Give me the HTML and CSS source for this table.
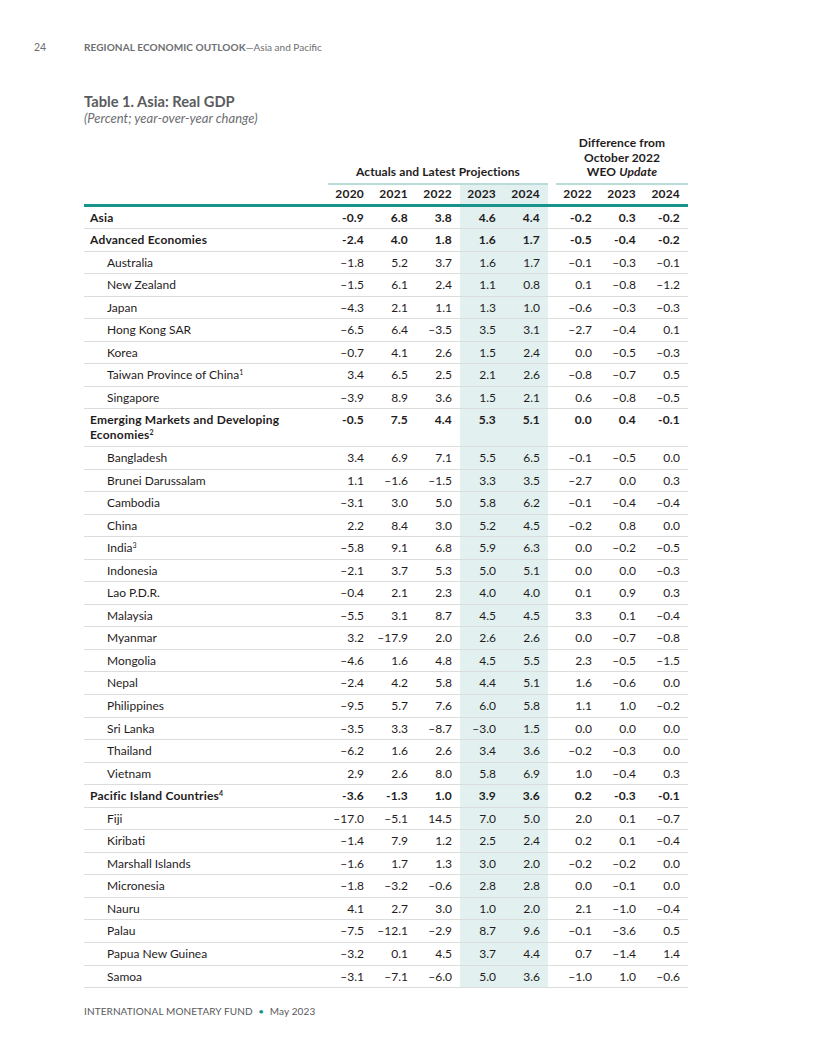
FILE: index.html
```html
<!DOCTYPE html>
<html lang="en">
<head>
<meta charset="utf-8">
<title>Table 1. Asia: Real GDP</title>
<link rel="stylesheet" href="styles.css">
</head>
<body>
<div class="page">
  <header class="running-head">
    <span class="folio">24</span>
    <span class="head-title"><b>REGIONAL ECONOMIC OUTLOOK</b>—Asia and Pacific</span>
  </header>

  <section class="content">
    <h1 class="table-title">Table 1. Asia: Real GDP</h1>
    <p class="table-sub">(Percent; year-over-year change)</p>

    <table class="gdp">
      <colgroup>
        <col class="c-label">
        <col class="c-num"><col class="c-num"><col class="c-num">
        <col class="c-num"><col class="c-num">
        <col class="c-gap">
        <col class="c-num"><col class="c-num"><col class="c-num">
      </colgroup>
      <thead>
        <tr class="group-row">
          <th></th>
          <th colspan="5" class="group"><span>Actuals and Latest Projections</span></th>
          <th></th>
          <th colspan="3" class="group"><span>Difference from<br>October 2022<br>WEO <i>Update</i></span></th>
        </tr>
        <tr class="year-row">
          <th></th>
          <th>2020</th><th>2021</th><th>2022</th><th class="sh">2023</th><th class="sh">2024</th>
          <th></th>
          <th>2022</th><th>2023</th><th>2024</th>
        </tr>
      </thead>
      <tbody>
        <tr class="agg"><td>Asia</td><td>-0.9</td><td>6.8</td><td>3.8</td><td class="sh">4.6</td><td class="sh">4.4</td><td></td><td>-0.2</td><td>0.3</td><td>-0.2</td></tr>
        <tr class="agg"><td>Advanced Economies</td><td>-2.4</td><td>4.0</td><td>1.8</td><td class="sh">1.6</td><td class="sh">1.7</td><td></td><td>-0.5</td><td>-0.4</td><td>-0.2</td></tr>
        <tr><td>Australia</td><td>–1.8</td><td>5.2</td><td>3.7</td><td class="sh">1.6</td><td class="sh">1.7</td><td></td><td>–0.1</td><td>–0.3</td><td>–0.1</td></tr>
        <tr><td>New Zealand</td><td>–1.5</td><td>6.1</td><td>2.4</td><td class="sh">1.1</td><td class="sh">0.8</td><td></td><td>0.1</td><td>–0.8</td><td>–1.2</td></tr>
        <tr><td>Japan</td><td>–4.3</td><td>2.1</td><td>1.1</td><td class="sh">1.3</td><td class="sh">1.0</td><td></td><td>–0.6</td><td>–0.3</td><td>–0.3</td></tr>
        <tr><td>Hong Kong SAR</td><td>–6.5</td><td>6.4</td><td>–3.5</td><td class="sh">3.5</td><td class="sh">3.1</td><td></td><td>–2.7</td><td>–0.4</td><td>0.1</td></tr>
        <tr><td>Korea</td><td>–0.7</td><td>4.1</td><td>2.6</td><td class="sh">1.5</td><td class="sh">2.4</td><td></td><td>0.0</td><td>–0.5</td><td>–0.3</td></tr>
        <tr><td>Taiwan Province of China<sup>1</sup></td><td>3.4</td><td>6.5</td><td>2.5</td><td class="sh">2.1</td><td class="sh">2.6</td><td></td><td>–0.8</td><td>–0.7</td><td>0.5</td></tr>
        <tr><td>Singapore</td><td>–3.9</td><td>8.9</td><td>3.6</td><td class="sh">1.5</td><td class="sh">2.1</td><td></td><td>0.6</td><td>–0.8</td><td>–0.5</td></tr>
        <tr class="agg two-line"><td>Emerging Markets and Developing Economies<sup>2</sup></td><td>-0.5</td><td>7.5</td><td>4.4</td><td class="sh">5.3</td><td class="sh">5.1</td><td></td><td>0.0</td><td>0.4</td><td>-0.1</td></tr>
        <tr><td>Bangladesh</td><td>3.4</td><td>6.9</td><td>7.1</td><td class="sh">5.5</td><td class="sh">6.5</td><td></td><td>–0.1</td><td>–0.5</td><td>0.0</td></tr>
        <tr><td>Brunei Darussalam</td><td>1.1</td><td>–1.6</td><td>–1.5</td><td class="sh">3.3</td><td class="sh">3.5</td><td></td><td>–2.7</td><td>0.0</td><td>0.3</td></tr>
        <tr><td>Cambodia</td><td>–3.1</td><td>3.0</td><td>5.0</td><td class="sh">5.8</td><td class="sh">6.2</td><td></td><td>–0.1</td><td>–0.4</td><td>–0.4</td></tr>
        <tr><td>China</td><td>2.2</td><td>8.4</td><td>3.0</td><td class="sh">5.2</td><td class="sh">4.5</td><td></td><td>–0.2</td><td>0.8</td><td>0.0</td></tr>
        <tr><td>India<sup>3</sup></td><td>–5.8</td><td>9.1</td><td>6.8</td><td class="sh">5.9</td><td class="sh">6.3</td><td></td><td>0.0</td><td>–0.2</td><td>–0.5</td></tr>
        <tr><td>Indonesia</td><td>–2.1</td><td>3.7</td><td>5.3</td><td class="sh">5.0</td><td class="sh">5.1</td><td></td><td>0.0</td><td>0.0</td><td>–0.3</td></tr>
        <tr><td>Lao P.D.R.</td><td>–0.4</td><td>2.1</td><td>2.3</td><td class="sh">4.0</td><td class="sh">4.0</td><td></td><td>0.1</td><td>0.9</td><td>0.3</td></tr>
        <tr><td>Malaysia</td><td>–5.5</td><td>3.1</td><td>8.7</td><td class="sh">4.5</td><td class="sh">4.5</td><td></td><td>3.3</td><td>0.1</td><td>–0.4</td></tr>
        <tr><td>Myanmar</td><td>3.2</td><td>–17.9</td><td>2.0</td><td class="sh">2.6</td><td class="sh">2.6</td><td></td><td>0.0</td><td>–0.7</td><td>–0.8</td></tr>
        <tr><td>Mongolia</td><td>–4.6</td><td>1.6</td><td>4.8</td><td class="sh">4.5</td><td class="sh">5.5</td><td></td><td>2.3</td><td>–0.5</td><td>–1.5</td></tr>
        <tr><td>Nepal</td><td>–2.4</td><td>4.2</td><td>5.8</td><td class="sh">4.4</td><td class="sh">5.1</td><td></td><td>1.6</td><td>–0.6</td><td>0.0</td></tr>
        <tr><td>Philippines</td><td>–9.5</td><td>5.7</td><td>7.6</td><td class="sh">6.0</td><td class="sh">5.8</td><td></td><td>1.1</td><td>1.0</td><td>–0.2</td></tr>
        <tr><td>Sri Lanka</td><td>–3.5</td><td>3.3</td><td>–8.7</td><td class="sh">–3.0</td><td class="sh">1.5</td><td></td><td>0.0</td><td>0.0</td><td>0.0</td></tr>
        <tr><td>Thailand</td><td>–6.2</td><td>1.6</td><td>2.6</td><td class="sh">3.4</td><td class="sh">3.6</td><td></td><td>–0.2</td><td>–0.3</td><td>0.0</td></tr>
        <tr><td>Vietnam</td><td>2.9</td><td>2.6</td><td>8.0</td><td class="sh">5.8</td><td class="sh">6.9</td><td></td><td>1.0</td><td>–0.4</td><td>0.3</td></tr>
        <tr class="agg"><td>Pacific Island Countries<sup>4</sup></td><td>-3.6</td><td>-1.3</td><td>1.0</td><td class="sh">3.9</td><td class="sh">3.6</td><td></td><td>0.2</td><td>-0.3</td><td>-0.1</td></tr>
        <tr><td>Fiji</td><td>–17.0</td><td>–5.1</td><td>14.5</td><td class="sh">7.0</td><td class="sh">5.0</td><td></td><td>2.0</td><td>0.1</td><td>–0.7</td></tr>
        <tr><td>Kiribati</td><td>–1.4</td><td>7.9</td><td>1.2</td><td class="sh">2.5</td><td class="sh">2.4</td><td></td><td>0.2</td><td>0.1</td><td>–0.4</td></tr>
        <tr><td>Marshall Islands</td><td>–1.6</td><td>1.7</td><td>1.3</td><td class="sh">3.0</td><td class="sh">2.0</td><td></td><td>–0.2</td><td>–0.2</td><td>0.0</td></tr>
        <tr><td>Micronesia</td><td>–1.8</td><td>–3.2</td><td>–0.6</td><td class="sh">2.8</td><td class="sh">2.8</td><td></td><td>0.0</td><td>–0.1</td><td>0.0</td></tr>
        <tr><td>Nauru</td><td>4.1</td><td>2.7</td><td>3.0</td><td class="sh">1.0</td><td class="sh">2.0</td><td></td><td>2.1</td><td>–1.0</td><td>–0.4</td></tr>
        <tr><td>Palau</td><td>–7.5</td><td>–12.1</td><td>–2.9</td><td class="sh">8.7</td><td class="sh">9.6</td><td></td><td>–0.1</td><td>–3.6</td><td>0.5</td></tr>
        <tr><td>Papua New Guinea</td><td>–3.2</td><td>0.1</td><td>4.5</td><td class="sh">3.7</td><td class="sh">4.4</td><td></td><td>0.7</td><td>–1.4</td><td>1.4</td></tr>
        <tr><td>Samoa</td><td>–3.1</td><td>–7.1</td><td>–6.0</td><td class="sh">5.0</td><td class="sh">3.6</td><td></td><td>–1.0</td><td>1.0</td><td>–0.6</td></tr>
      </tbody>
    </table>
  </section>

  <footer class="running-foot">INTERNATIONAL MONETARY FUND <span class="dot">•</span> May 2023</footer>
</div>
</body>
</html>
```

FILE: styles.css
```css
* { box-sizing: border-box; }

html, body {
  margin: 0;
  padding: 0;
  background: #ffffff;
}

body {
  font-family: Lato, "Liberation Sans", sans-serif;
  color: #1f1c1d;
}

.page {
  width: 816px;
  height: 1056px;
  position: relative;
  padding-top: 41px;
}

.running-head {
  display: flex;
  align-items: baseline;
  padding-left: 34px;
  font-size: 10px;
  color: #6d6e71;
}

.folio {
  width: 50px;
  font-size: 10.5px;
}

.head-title b {
  font-weight: 700;
  letter-spacing: 0.1px;
}

.content {
  padding-left: 84px;
  padding-top: 39px;
}

.table-title {
  margin: 0;
  font-size: 14.7px;
  font-weight: 700;
  color: #5a5b5d;
  line-height: 18px;
}

.table-sub {
  margin: 0;
  font-size: 13px;
  font-style: italic;
  color: #6d6e71;
  line-height: 16px;
}

.gdp {
  margin-top: 10px;
  width: 604px;
  table-layout: fixed;
  border-collapse: collapse;
  font-size: 12px;
  line-height: 14px;
}

.c-label { width: 244px; }
.c-num { width: 44px; }
.c-gap { width: 8px; }

.gdp th {
  font-weight: 700;
  padding: 0;
}

.group-row th {
  vertical-align: bottom;
  padding: 0;
  font-size: 12px;
  line-height: 14.5px;
}

.group-row th.group {
  text-align: center;
  border-bottom: 2px solid #b9dcd9;
  padding-bottom: 3px;
  letter-spacing: 0.1px;
}

.year-row th {
  text-align: right;
  padding: 2.5px 8px 2.5px 0;
  border-bottom: 3px solid #17958d;
  letter-spacing: 0.2px;
}

.gdp td {
  padding: 4px 8px 3.55px 0;
  text-align: right;
  vertical-align: top;
  border-bottom: 1px solid #dcdcdc;
  white-space: nowrap;
}

.gdp td:first-child {
  text-align: left;
  padding-left: 23px;
  white-space: normal;
}

.gdp tr.agg td {
  font-weight: 700;
  letter-spacing: 0.2px;
}

.gdp tr.agg td:first-child {
  padding-left: 6px;
}

.gdp tr.two-line td:first-child {
  line-height: 14.5px;
}

.gdp .sh {
  background: #e2f0ef;
}

.gdp sup {
  font-size: 7px;
  line-height: 0;
  vertical-align: 4px;
}

.running-foot {
  position: absolute;
  left: 84px;
  top: 1005px;
  font-size: 10px;
  color: #58595b;
  letter-spacing: 0.1px;
}

.running-foot .dot {
  color: #17958d;
  margin: 0 3px;
}
```
